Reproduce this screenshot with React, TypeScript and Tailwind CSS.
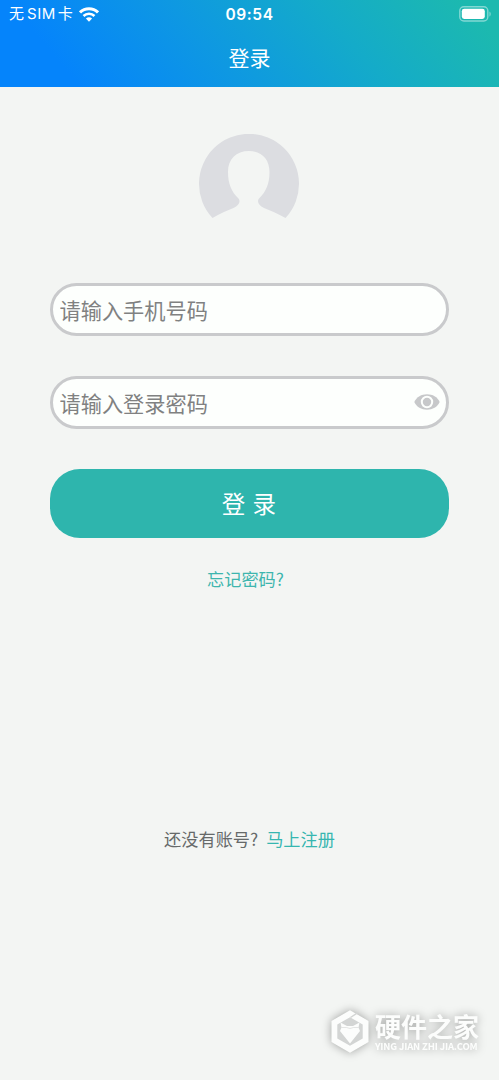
import { useState } from "react";

function WifiIcon() {
  return (
    <svg width="20" height="15" viewBox="0 0 20 15" fill="none" aria-hidden>
      <path d="M1 5.400a12.800 12.800 0 0 1 18 0" stroke="white" strokeWidth="3" />
      <path d="M4.500 9a7.800 7.800 0 0 1 11 0" stroke="white" strokeWidth="2.600" />
      <path d="M10 14.700l-3.100-3.100a4.500 4.500 0 0 1 6.200 0z" fill="white" />
    </svg>
  );
}

function BatteryIcon() {
  return (
    <svg width="33" height="16" viewBox="0 0 33 16" fill="none" aria-hidden>
      <rect x="0.8" y="0.8" width="28" height="14.200" rx="4" stroke="white" strokeOpacity="0.45" strokeWidth="1.400" />
      <rect x="2.800" y="2.800" width="23" height="10.200" rx="2.400" fill="white" />
      <path d="M30.500 5.400c1.500.7 1.500 4.400 0 5.100z" fill="white" fillOpacity="0.5" />
    </svg>
  );
}

function Avatar() {
  return (
    <svg width="100" height="84" viewBox="0 0 100 84" className="block" aria-hidden>
      <path
        d="M13.500 84A50 50 0 1 1 86.500 84C79 79.500 71 76.500 65 74C59 71.500 57.500 67 60.500 64C67 57.500 70.500 50 70.500 38C70.500 25 62.500 17 50 17C37 17 29 25 29 38C29 50 32.500 57.500 39 64C42 67 40.500 71.500 34.500 74C28.500 76.500 20.500 79.500 13.500 84Z"
        fill="#dcdde1"
      />
    </svg>
  );
}

function EyeIcon() {
  return (
    <svg width="26" height="16" viewBox="0 0 26 16" className="block" aria-hidden>
      <path d="M0.300 8C2.500 3 7.500 0.300 13 0.300S23.500 3 25.700 8C23.500 13 18.500 15.700 13 15.700S2.500 13 0.300 8Z" fill="#c7c8ca" />
      <circle cx="13" cy="8" r="5.200" fill="#c7c8ca" stroke="#fdfffd" strokeWidth="2" />
    </svg>
  );
}

function Watermark() {
  return (
    <div className="flex items-center gap-[6px] text-[#fcfdfc] drop-shadow-[0_0_5px_rgba(0,0,0,0.35)]">
      <svg width="38" height="43" viewBox="0 0 38 43" aria-hidden>
        <path d="M19 1L37 11v21L19 42 1 32V11z" fill="#d3d5d4" />
        <path
          fillRule="evenodd"
          d="M19 .3L37.500 11v21L19 42.700.500 32V11zM19 7.200L6.300 14.500v14L19 35.800l12.700-7.300v-14z"
          fill="#fcfdfc"
        />
        <path d="M19.500 7.500L26.500 2.800" stroke="#d3d5d4" strokeWidth="1.500" />
        <path d="M9.500 12.500L16 16h6L28.500 12.500 27.500 17.500 29 21 19 33.500 9 21l1.500-3.500z" fill="#fcfdfc" />
        <path d="M10.500 17.500h5l3.500 1 3.500-1h5" stroke="#d3d5d4" strokeWidth=".6" fill="none" />
      </svg>
      <div className="flex w-[104px] flex-col">
        <span className="h-[28px] whitespace-nowrap text-[26px] leading-[28px] font-bold">硬件之家</span>
        <span className="whitespace-nowrap text-[9.500px] leading-[12px] font-bold tracking-[-0.160px]">
          YING JIAN ZHI JIA.COM
        </span>
      </div>
    </div>
  );
}

const inputClass =
  "min-w-0 flex-1 bg-transparent pt-px text-[21.200px] text-[#777878] outline-none placeholder:text-[#808181] placeholder:opacity-100";

export default function App() {
  const [showPassword, setShowPassword] = useState(false);

  return (
    <div className="flex h-[1080px] w-[499px] flex-col overflow-hidden bg-[#f3f5f3] font-['Noto_Sans_CJK_SC',sans-serif]">
      <header className="h-[86.500px] shrink-0 bg-linear-[50deg,#0584fb_14%,#0e98e2_42%,#14abc9_68%,#1cb9af_94%] text-white">
        <div className="grid h-7 grid-cols-3 items-center pr-[6px] pl-[9px]">
          <div className="flex items-center gap-[6px] font-[Inter,'Noto_Sans_CJK_SC',sans-serif] text-[15px] whitespace-nowrap">
            <span className="pt-px">
              无<span className="mr-[2px] ml-[3px] tracking-[0.500px]">SIM</span>卡
            </span>
            <WifiIcon />
          </div>
          <time className="pt-px pr-[3px] text-center font-[Inter,sans-serif] text-[15.500px] font-semibold tracking-[0.600px]">
            09:54
          </time>
          <div className="flex justify-end pr-px">
            <BatteryIcon />
          </div>
        </div>
        <h1 className="flex h-[58px] items-center justify-center pt-px text-[21px]">登录</h1>
      </header>

      <main className="flex flex-1 flex-col items-center">
        <div className="mt-[47px] mr-px">
          <Avatar />
        </div>

        <form className="mt-[65px] flex w-[399px] flex-col" onSubmit={(e) => e.preventDefault()}>
          <label className="flex h-[53px] items-center rounded-full border-3 border-[#c9cacc] bg-[#fdfffd] px-[6.500px]">
            <input className={inputClass} type="tel" placeholder="请输入手机号码" />
          </label>
          <label className="mt-10 flex h-[53px] items-center rounded-full border-3 border-[#c9cacc] bg-[#fdfffd] px-[6.500px]">
            <input
              className={inputClass}
              type={showPassword ? "text" : "password"}
              placeholder="请输入登录密码"
            />
            <button type="button" aria-label="显示密码" onClick={() => setShowPassword(!showPassword)}>
              <EyeIcon />
            </button>
          </label>
          <button
            type="submit"
            className="mt-10 h-[69px] rounded-[30px] bg-[#2eb5ad] pt-px pr-px text-[23.500px] [word-spacing:2px] text-white"
          >
            登 录
          </button>
        </form>

        <a href="#forgot" className="mt-[29px] mr-2 text-[17.200px] leading-6 text-[#3eb5ae]">
          忘记密码?
        </a>

        <p className="mt-[236px] flex gap-[8px] text-[17.200px] leading-6 text-[#666969]">
          <span>还没有账号?</span>
          <a href="#register" className="text-[#36b6b0]">
            马上注册
          </a>
        </p>

        <footer className="mt-auto mr-[20px] mb-[27px] self-end">
          <Watermark />
        </footer>
      </main>
    </div>
  );
}
